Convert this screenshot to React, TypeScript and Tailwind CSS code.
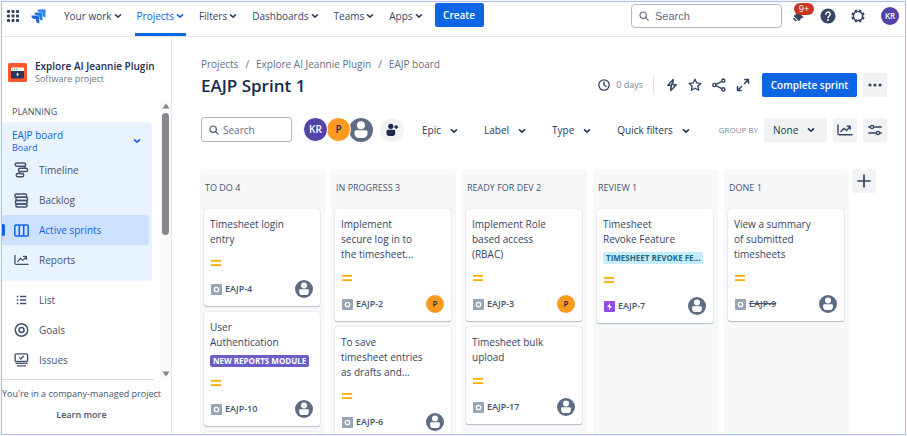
import React from "react";
import { clsx } from "clsx";

type IconProps = { className?: string };

const Chevron = ({ className }: IconProps) => (
  <svg viewBox="0 0 8 8" className={clsx("size-2 shrink-0", className)} fill="none" stroke="currentColor" strokeWidth="1.6" strokeLinecap="round" strokeLinejoin="round" aria-hidden="true">
    <path d="M1.5 2.8 4 5.2l2.5-2.4" />
  </svg>
);

const SearchIcon = ({ className }: IconProps) => (
  <svg viewBox="0 0 10 10" className={clsx("size-[10px] shrink-0", className)} fill="none" stroke="currentColor" strokeWidth="1.2" strokeLinecap="round" aria-hidden="true">
    <circle cx="4.2" cy="4.2" r="3.2" />
    <path d="m6.6 6.6 2.6 2.6" />
  </svg>
);

const AppSwitcherIcon = () => (
  <svg viewBox="0 0 12 12" className="size-3" fill="currentColor" aria-hidden="true">
    {[0, 4.5, 9].map((y) => [0, 4.5, 9].map((x) => <rect key={`${x}-${y}`} x={x} y={y} width="3" height="3" rx="0.8" />))}
  </svg>
);

const JiraLogo = () => (
  <svg viewBox="0 0 15 15" className="size-[15px]" aria-hidden="true">
    <path fill="#2684ff" d="M6.6.5h7.9v7.9A3.5 3.5 0 0 1 11.2 5V3.9H10A3.5 3.5 0 0 1 6.6.5z" />
    <path fill="#2178f0" d="M3.5 3.5h7.9v7.9A3.5 3.5 0 0 1 8.1 8V6.9H6.9A3.5 3.5 0 0 1 3.5 3.5z" />
    <path fill="#1868db" d="M.4 6.6h7.9v7.9A3.5 3.5 0 0 1 5 11.1V10H3.8A3.5 3.5 0 0 1 .4 6.6z" />
    <path stroke="#fff" strokeWidth=".6" fill="none" d="M6.9 3.500h4.500v4.500M3.800 6.600h4.500v4.500" opacity=".6" />
  </svg>
);

const BellIcon = () => (
  <svg viewBox="0 0 14 14" className="size-[14px]" fill="currentColor" aria-hidden="true">
    <path d="M4.8 2.2 12 8.6l-2.600.5-2 2.700c-.2.3-.5.3-.7.1L2 7.2c-.2-.2-.2-.5.1-.7l2-1.300z" />
    <path d="M1.9 8.400 5 11.500a2.200 2.200 0 0 1-3.100-3.100z" />
  </svg>
);

const HelpIcon = () => (
  <svg viewBox="0 0 16 16" className="size-4" aria-hidden="true">
    <circle cx="8" cy="8" r="7.5" fill="#344563" />
    <path d="M5.800 6.300a2.200 2.200 0 1 1 3.300 1.900c-.7.4-1.100.7-1.100 1.400" fill="none" stroke="#fff" strokeWidth="1.5" strokeLinecap="round" />
    <circle cx="8" cy="12" r="1" fill="#fff" />
  </svg>
);

const GearIcon = () => (
  <svg viewBox="0 0 14 14" className="size-[14px]" fill="none" stroke="currentColor" aria-hidden="true">
    <circle cx="7" cy="7" r="4.6" strokeWidth="1.5" />
    <g strokeWidth="2.6">
      {[22.5, 67.5, 112.5, 157.5, 202.5, 247.5, 292.5, 337.5].map((a) => (
        <path key={a} d="M7 2.300V.4" transform={`rotate(${a} 7 7)`} />
      ))}
    </g>
  </svg>
);

const ProjectLogo = () => (
  <svg viewBox="0 0 19 19" className="size-[19px] shrink-0" aria-hidden="true">
    <rect width="19" height="19" rx="1.5" fill="#ff5630" />
    <path d="M3 5.500A1 1 0 0 1 4 4.500h11a1 1 0 0 1 1 1V8H3z" fill="#fff" />
    <circle cx="4.700" cy="6.200" r=".7" fill="#ff8f73" />
    <circle cx="6.700" cy="6.200" r=".7" fill="#36b37e" />
    <circle cx="8.700" cy="6.200" r=".7" fill="#00b8d9" />
    <path d="M3 8h13v6.500a1 1 0 0 1-1 1H4a1 1 0 0 1-1-1z" fill="#253858" />
    <path d="M9.700 9.700 8.500 11.700h1l-.3 1.500 1.600-2.100h-1z" fill="#fff" stroke="#fff" strokeWidth=".4" />
  </svg>
);

const TimelineIcon = () => (
  <svg viewBox="0 0 15 16" className="h-4 w-[15px]" fill="none" stroke="currentColor" strokeWidth="1.5" aria-hidden="true">
    <rect x="1.2" y="1" width="10.5" height="3.2" rx="1.6" />
    <rect x="4.5" y="6.3" width="9" height="3.2" rx="1.6" />
    <rect x="2.2" y="11.6" width="7.5" height="3.2" rx="1.6" />
    <path d="M11.500 3.800 10 6.300M6 9.300l-1.500 2.500" />
  </svg>
);

const BacklogIcon = () => (
  <svg viewBox="0 0 15 15" className="size-[15px]" fill="none" stroke="currentColor" strokeWidth="1.5" aria-hidden="true">
    <rect x="1" y="1" width="11.5" height="3.3" rx="1" />
    <rect x="2" y="4.3" width="11.5" height="3.3" rx="1" />
    <rect x="1.5" y="7.6" width="11.5" height="3.3" rx="1" />
    <rect x="2" y="10.9" width="11" height="3.1" rx="1" />
  </svg>
);

const BoardIcon = () => (
  <svg viewBox="0 0 15 13" className="h-[13px] w-[15px]" fill="none" stroke="currentColor" strokeWidth="1.5" aria-hidden="true">
    <rect x=".8" y="1" width="13.4" height="11" rx="1" />
    <path d="M5.300 1v11M9.700 1v11" />
  </svg>
);

const ChartIcon = () => (
  <svg viewBox="0 0 16 12" className="h-3 w-4" fill="none" stroke="currentColor" strokeWidth="1.4" strokeLinecap="round" strokeLinejoin="round" aria-hidden="true">
    <path d="M1 1v8.500a1.200 1.200 0 0 0 1.200 1.200H15" />
    <path d="m4 7.500 3-3.300 2.400 2.200L13 2.800M10.200 2.200h3v3" />
  </svg>
);

const ListIcon = () => (
  <svg viewBox="0 0 10 10" className="h-[10px] w-[15px]" fill="none" stroke="currentColor" strokeWidth="1.5" aria-hidden="true">
    <path d="M.2 1.500h1.600M.2 5h1.600M.2 8.500h1.600M3.500 1.500h6.300M3.500 5h6.300M3.500 8.500h6.300" />
  </svg>
);

const GoalIcon = () => (
  <svg viewBox="0 0 14 14" className="h-[14px] w-[15px]" fill="none" stroke="currentColor" strokeWidth="1.5" aria-hidden="true">
    <circle cx="7" cy="7" r="6.2" />
    <circle cx="7" cy="7" r="2.5" />
  </svg>
);

const IssuesIcon = () => (
  <svg viewBox="0 0 15 14" className="h-[14px] w-[15px]" fill="none" stroke="currentColor" strokeWidth="1.4" aria-hidden="true">
    <rect x="1.2" y=".9" width="12.4" height="7.6" rx="1" />
    <path d="m5.300 4.600 1.500 1.500 3-3M1.500 10.400h12M3 12.900h9" />
  </svg>
);

const ClockIcon = () => (
  <svg viewBox="0 0 12 12" className="size-3" fill="none" stroke="currentColor" strokeWidth="1.3" strokeLinecap="round" aria-hidden="true">
    <circle cx="6" cy="6" r="5.2" />
    <path d="M6 3v3l2 1.500" />
  </svg>
);

const BoltIcon = () => (
  <svg viewBox="0 0 12 14" className="h-[14px] w-3" fill="none" stroke="currentColor" strokeWidth="1.4" strokeLinejoin="round" aria-hidden="true">
    <path d="M7.200 1.500 1.800 7.200h3.400L4.800 12.500l5.400-5.700H6.800z" />
    <path d="M6.500 3 5.500 7l-1 4" strokeWidth="1" />
  </svg>
);

const StarIcon = () => (
  <svg viewBox="0 0 14 14" className="size-[14px]" fill="none" stroke="currentColor" strokeWidth="1.3" strokeLinejoin="round" aria-hidden="true">
    <path d="m7 1.200 1.700 3.700 4.100.5-3 2.800.8 4L7 10.200l-3.600 2 .8-4-3-2.800 4.100-.5z" />
  </svg>
);

const ShareIcon = () => (
  <svg viewBox="0 0 14 14" className="size-[14px]" fill="none" stroke="currentColor" strokeWidth="1.4" aria-hidden="true">
    <circle cx="2.4" cy="7" r="1.6" />
    <circle cx="11.3" cy="2.6" r="1.6" />
    <circle cx="11.3" cy="11.4" r="1.6" />
    <path d="M3.900 6.300 9.800 3.300M3.900 7.700l5.900 3" />
  </svg>
);

const ExpandIcon = () => (
  <svg viewBox="0 0 14 14" className="size-[14px]" fill="none" stroke="currentColor" strokeWidth="1.5" strokeLinecap="round" strokeLinejoin="round" aria-hidden="true">
    <path d="M8.800 1.500h3.700v3.700M12.200 1.800 8.500 5.500M5.200 12.500H1.500V8.800M1.800 12.200l3.700-3.700" />
  </svg>
);

const DotsIcon = () => (
  <svg viewBox="0 0 14 4" className="h-1 w-[14px]" fill="currentColor" aria-hidden="true">
    <circle cx="2" cy="2" r="1.6" />
    <circle cx="7" cy="2" r="1.6" />
    <circle cx="12" cy="2" r="1.6" />
  </svg>
);

const SlidersIcon = () => (
  <svg viewBox="0 0 14 12" className="h-3 w-[14px]" fill="none" stroke="currentColor" strokeWidth="1.4" strokeLinecap="round" aria-hidden="true">
    <path d="M.8 3h1.400M5.800 3h7.400M.8 9h7.400M11.800 9h1.400" />
    <circle cx="4" cy="3" r="1.6" />
    <circle cx="10" cy="9" r="1.6" />
  </svg>
);

const AddPeopleIcon = () => (
  <svg viewBox="0 0 14 14" className="size-[14px]" fill="currentColor" aria-hidden="true">
    <circle cx="5.8" cy="3.3" r="2.6" />
    <path d="M1.500 8A1.200 1.200 0 0 1 2.700 6.800H9A1.200 1.200 0 0 1 10.200 8v2.300A2.700 2.700 0 0 1 7.500 13H4.200a2.700 2.700 0 0 1-2.700-2.700z" />
    <path d="M11.200 2v4M9.200 4h4" stroke="currentColor" strokeWidth="1.3" />
  </svg>
);

const PlusIcon = () => (
  <svg viewBox="0 0 14 14" className="size-[14px]" fill="none" stroke="currentColor" strokeWidth="1.7" aria-hidden="true">
    <path d="M7 .4v13.200M.4 7h13.200" />
  </svg>
);

const PersonAvatar = ({ className }: IconProps) => (
  <svg viewBox="0 0 24 24" className={clsx("shrink-0", className)} role="img" aria-label="Unassigned">
    <circle cx="12" cy="12" r="12" fill="#5e6c84" />
    <circle cx="12" cy="7.2" r="4" fill="#fff" />
    <path d="M5.500 13.800a1.600 1.600 0 0 1 1.600-1.600h9.800a1.600 1.600 0 0 1 1.600 1.600v1.700a4.500 4.500 0 0 1-4.500 4.500h-4a4.500 4.500 0 0 1-4.500-4.500z" fill="#fff" />
  </svg>
);

const PriorityIcon = () => (
  <svg viewBox="0 0 10 14" className="h-[14px] w-[10px]" role="img" aria-label="Medium priority">
    <path d="M0 4.800h10M0 9.200h10" stroke="#ffab00" strokeWidth="1.8" />
  </svg>
);

const TypeIcon = ({ epic }: { epic?: boolean }) =>
  epic ? (
    <svg viewBox="0 0 11 11" className="size-[11px] shrink-0" role="img" aria-label="Epic">
      <rect width="11" height="11" rx="1" fill="#904ee2" />
      <path d="M6 2 3 6h2.200L5 9l3-4H5.800z" fill="#fff" />
    </svg>
  ) : (
    <svg viewBox="0 0 11 11" className="size-[11px] shrink-0" role="img" aria-label="Task">
      <rect width="11" height="11" rx="1" fill="#97a5b4" />
      <circle cx="5.5" cy="5.5" r="2.2" fill="none" stroke="#fff" strokeWidth="1.3" />
    </svg>
  );

const navItems = ["Your work", "Projects", "Filters", "Dashboards", "Teams", "Apps"];

const TopBar = () => (
  <header className="flex h-[35px] shrink-0 items-stretch border-b border-[#e4e6ec] pr-[6px] pl-[5px] text-[#344563]">
    <div className="flex h-7 items-center gap-3">
      <button aria-label="Switch apps"><AppSwitcherIcon /></button>
      <a href="#home" aria-label="Jira home"><JiraLogo /></a>
    </div>
    <nav className="ml-4 flex items-stretch gap-[11px]">
      {navItems.map((item) => (
        <button
          key={item}
          className={clsx(
            "flex items-start gap-[2px] border-b-[3px] px-[2px] pt-[6px] font-medium whitespace-nowrap",
            item === "Projects" ? "border-[#0c66e4] text-[#0c66e4]" : "border-transparent",
          )}
        >
          <span className="leading-4">{item}</span>
          <Chevron className="mt-1" />
        </button>
      ))}
    </nav>
    <button className="mt-px ml-[10px] h-6 w-[49px] rounded-[2px] bg-[#0c66e4] font-semibold text-white">Create</button>
    <div className="ml-auto flex h-7 items-center">
      <label className="mr-[10px] flex h-6 w-[151px] items-center gap-[6px] rounded-[4px] border border-[#b3b9c4] px-[7px] text-[#5e6c84]">
        <SearchIcon />
        <input aria-label="Search Jira" placeholder="Search" className="w-full min-w-0 bg-transparent font-['Liberation_Sans',sans-serif] text-[11px] outline-none placeholder:text-[#5e6c84]" />
      </label>
      <button aria-label="Notifications, more than 9" className="relative mr-[14px]">
        <BellIcon />
        <span className="absolute -top-[6px] left-[2px] flex h-3 w-5 items-center justify-center rounded-full bg-[#ca3521] text-[9px] text-white">9+</span>
      </button>
      <button aria-label="Help" className="mr-[15px]"><HelpIcon /></button>
      <button aria-label="Settings" className="mr-4"><GearIcon /></button>
      <button className="size-[18px] rounded-full bg-[#5243aa] text-[8px] font-semibold text-white">KR</button>
    </div>
  </header>
);

const boardLinks = [
  { label: "Timeline", icon: <TimelineIcon /> },
  { label: "Backlog", icon: <BacklogIcon /> },
  { label: "Active sprints", icon: <BoardIcon />, active: true },
  { label: "Reports", icon: <ChartIcon /> },
];

const projectLinks = [
  { label: "List", icon: <ListIcon /> },
  { label: "Goals", icon: <GoalIcon /> },
  { label: "Issues", icon: <IssuesIcon /> },
];

const SideLink = ({ label, icon, active }: { label: string; icon: React.ReactNode; active?: boolean }) => (
  <a
    href={`#${label}`}
    aria-current={active ? "page" : undefined}
    className={clsx(
      "mr-[3px] flex h-[30px] items-center rounded-[3px]",
      active ? "bg-[#cce0ff] text-[#0c66e4]" : "text-[#44546f]",
    )}
  >
    <span className={clsx("h-3 w-[3px] rounded-r-[2px]", active && "bg-[#0c66e4]")} />
    <span className="ml-[9px] flex w-[15px] justify-center">{icon}</span>
    <span className="ml-[10px]">{label}</span>
  </a>
);

const Sidebar = () => (
  <aside className="flex w-[170px] shrink-0 flex-col border-r border-[#e4e6ec]">
    <div className="flex h-[63px] shrink-0 items-center gap-2 pt-2 pl-[6px]">
      <ProjectLogo />
      <div className="whitespace-nowrap">
        <h2 className="leading-[13px] font-semibold text-[#172b4d]">Explore AI Jeannie Plugin</h2>
        <p className="text-[9px] leading-3 text-[#6b778c]">Software project</p>
      </div>
    </div>
    <div className="flex min-h-0 flex-1">
      <div className="flex min-w-0 flex-1 flex-col overflow-hidden">
        <h3 className="flex h-[22px] shrink-0 items-center pt-px pl-[10px] text-[9px] font-medium text-[#44546f]">PLANNING</h3>
        <div className="mr-2 shrink-0 rounded-r-[4px] bg-[#e9f2ff] pb-[6px]">
          <button className="flex h-[33px] w-full items-center justify-between pt-[5px] pr-[11px] pl-[10px] text-left text-[#0c66e4]">
            <span>
              <span className="block leading-[14px]">EAJP board</span>
              <span className="block text-[9px] leading-3">Board</span>
            </span>
            <Chevron />
          </button>
          {boardLinks.map((l) => <SideLink key={l.label} {...l} />)}
        </div>
        <nav className="mt-1">
          {projectLinks.map((l) => <SideLink key={l.label} {...l} />)}
        </nav>
        <hr className="mt-auto mr-[6px] border-[#d5d9e2]" />
      </div>
      <div className="flex w-[11px] shrink-0 flex-col items-center bg-[#fafafa] py-[3px]" aria-hidden="true">
        <svg viewBox="0 0 8 6" className="h-[6px] w-2" fill="#85888c"><path d="M4 .5 7.700 5.500H.3z" /></svg>
        <div className="mt-1 h-[122px] w-[7px] rounded-full bg-[#85888c]" />
        <svg viewBox="0 0 8 6" className="mt-auto h-[6px] w-2" fill="#85888c"><path d="M4 5.500.3.5h7.400z" /></svg>
      </div>
    </div>
    <div className="flex h-[54px] shrink-0 flex-col items-center pt-[7px] pr-[10px] text-[#44546f]">
      <p className="text-[9px] leading-[14px] whitespace-nowrap">You're in a company-managed project</p>
      <a href="#learn" className="mt-[7px] text-[9px] leading-[14px] font-semibold">Learn more</a>
    </div>
  </aside>
);

type CardData = { lines: string; id: string; tag?: { text: string; tone: "purple" | "teal" }; epic?: boolean; who?: "P"; done?: boolean };

const columns: { name: string; count: number; cards: CardData[] }[] = [
  {
    name: "TO DO",
    count: 4,
    cards: [
      { lines: "Timesheet login\nentry", id: "EAJP-4" },
      { lines: "User\nAuthentication", id: "EAJP-10", tag: { text: "NEW REPORTS MODULE", tone: "purple" } },
      { lines: "", id: "" },
    ],
  },
  {
    name: "IN PROGRESS",
    count: 3,
    cards: [
      { lines: "Implement\nsecure log in to\nthe timesheet...", id: "EAJP-2", who: "P" },
      { lines: "To save\ntimesheet entries\nas drafts and...", id: "EAJP-6" },
    ],
  },
  {
    name: "READY FOR DEV",
    count: 2,
    cards: [
      { lines: "Implement Role\nbased access\n(RBAC)", id: "EAJP-3", who: "P" },
      { lines: "Timesheet bulk\nupload", id: "EAJP-17" },
    ],
  },
  {
    name: "REVIEW",
    count: 1,
    cards: [{ lines: "Timesheet\nRevoke Feature", id: "EAJP-7", epic: true, tag: { text: "TIMESHEET REVOKE FE...", tone: "teal" } }],
  },
  {
    name: "DONE",
    count: 1,
    cards: [{ lines: "View a summary\nof submitted\ntimesheets", id: "EAJP-9", done: true }],
  },
];

const Card = ({ lines, id, tag, epic, who, done }: CardData) => (
  <article className="min-h-10 shrink-0 rounded-[2px] bg-white pt-2 pr-[7px] pb-2 pl-[6px] shadow-[0_1px_1px_#091e4240,0_0_1px_#091e424f]">
    {id && (
      <>
        <p className="leading-[15px] whitespace-pre text-[#344563]">{lines}</p>
        {tag && (
          <div className="mt-[5px] flex">
            <span
              className={clsx(
                "h-3 truncate rounded-[2px] px-[3px] text-[8px] leading-3 font-bold",
                tag.tone === "purple" ? "bg-[#6e5dc6] text-white" : "bg-[#c6edfb] text-[#206a83]",
              )}
            >
              {tag.text}
            </span>
          </div>
        )}
        <div className="mt-[9px] pl-px"><PriorityIcon /></div>
        <div className="mt-[10px] flex h-[18px] items-center pl-px">
          <TypeIcon epic={epic} />
          <a href={`#${id}`} className={clsx("ml-[3px] text-[9px] font-semibold text-[#44546f]", done && "line-through")}>{id}</a>
          <span className="ml-auto">
            {who ? (
              <span className="flex size-[18px] items-center justify-center rounded-full bg-[#ff991f] text-[8px] font-semibold text-[#172b4d]">{who}</span>
            ) : (
              <PersonAvatar className="size-[18px]" />
            )}
          </span>
        </div>
      </>
    )}
  </article>
);

const FilterButton = ({ label }: { label: string }) => (
  <button className="flex items-center gap-[9px] font-medium whitespace-nowrap text-[#253858]">
    {label}
    <Chevron />
  </button>
);

const SquareButton = ({ label, children }: { label: string; children: React.ReactNode }) => (
  <button aria-label={label} className="flex size-6 shrink-0 items-center justify-center rounded-[2px] bg-[#f1f2f4] text-[#344563]">
    {children}
  </button>
);

const Board = () => (
  <main className="flex min-w-0 flex-1 flex-col overflow-hidden pr-[18px] pl-[29px]">
    <nav aria-label="Breadcrumb" className="mt-[19px] mb-px flex gap-[7px] leading-4 text-[#626f86]">
      <a href="#projects">Projects</a>
      <span>/</span>
      <a href="#project">Explore AI Jeannie Plugin</a>
      <span>/</span>
      <a href="#board">EAJP board</a>
    </nav>
    <div className="flex h-6 items-center text-[#344563]">
      <h1 className="pt-px text-[17px] leading-6 font-semibold whitespace-nowrap text-[#172b4d]">EAJP Sprint 1</h1>
      <div className="ml-auto flex items-center">
        <ClockIcon />
        <span className="ml-[6px] text-[9px] text-[#7a869a]">0 days</span>
        <span className="mr-3 ml-[10px] h-[18px] w-px bg-[#dfe1e6]" />
        <div className="mr-3 flex items-center gap-[10px]">
          <button aria-label="Automation"><BoltIcon /></button>
          <button aria-label="Star"><StarIcon /></button>
          <button aria-label="Share"><ShareIcon /></button>
          <button aria-label="Full screen"><ExpandIcon /></button>
        </div>
        <button className="mr-[6px] h-6 w-[95px] rounded-[2px] bg-[#0c66e4] font-semibold whitespace-nowrap text-white">Complete sprint</button>
        <SquareButton label="More actions"><DotsIcon /></SquareButton>
      </div>
    </div>
    <div className="mt-5 flex h-[25px] items-center">
      <label className="flex h-[25px] w-[91px] items-center gap-1 rounded-[3px] border border-[#b3b9c4] px-[7px] text-[#44546f]">
        <SearchIcon />
        <input aria-label="Search board" placeholder="Search" className="w-full min-w-0 bg-transparent pt-px outline-none placeholder:text-[#626f86]" />
      </label>
      <div className="ml-[11px] flex items-center">
        <button className="z-20 size-[25px] rounded-full border border-white bg-[#5243aa] text-[10px] font-semibold text-white">KR</button>
        <button className="z-10 -ml-[2px] size-[25px] rounded-full border border-white bg-[#ff991f] text-[10px] font-semibold text-[#172b4d]">P</button>
        <button aria-label="Unassigned" className="-ml-[2px]"><PersonAvatar className="size-6" /></button>
      </div>
      <button aria-label="Add people" className="ml-[7px] flex size-6 items-center justify-center rounded-full bg-[#f1f2f4] text-[#172b4d]"><AddPeopleIcon /></button>
      <div className="ml-[18px] flex gap-[26px] pt-[2px]">
        {["Epic", "Label", "Type", "Quick filters"].map((f) => <FilterButton key={f} label={f} />)}
      </div>
      <div className="ml-auto flex items-center gap-[6px]">
        <label htmlFor="group-by" className="text-[8px] whitespace-nowrap text-[#7a869a]">GROUP BY</label>
        <div className="relative">
          <select id="group-by" className="block h-6 w-[63px] appearance-none rounded-[2px] bg-[#f1f2f4] pt-px pl-[9px] font-medium text-[#253858]">
            <option>None</option>
          </select>
          <Chevron className="pointer-events-none absolute top-2 right-3 text-[#253858]" />
        </div>
        <SquareButton label="Insights"><ChartIcon /></SquareButton>
        <SquareButton label="View settings"><SlidersIcon /></SquareButton>
      </div>
    </div>
    <div className="mt-[27px] -ml-px flex min-h-0 flex-1 gap-[3px] pr-[11px]">
      <div className="flex min-h-0 flex-1 gap-[6px]">
        {columns.map((col) => (
          <section key={col.name} className="flex min-w-0 flex-1 flex-col gap-[6px] rounded-t-[4px] bg-[#f7f8f9] pr-[5px] pl-1">
            <h2 className="flex h-[34px] shrink-0 items-center pt-1 pl-px text-[9px] font-medium whitespace-nowrap text-[#44546f]">
              {col.name} {col.count}
            </h2>
            {col.cards.map((c, i) => <Card key={i} {...c} />)}
          </section>
        ))}
      </div>
      <SquareButton label="Add column"><PlusIcon /></SquareButton>
    </div>
  </main>
);

export default function App() {
  return (
    <div className="h-screen bg-[#f4f7fd] p-px font-['Open_Sans','Noto_Sans',sans-serif] text-[10px]">
      <div className="flex h-full flex-col overflow-hidden border border-[#a9c0ea] bg-white">
        <TopBar />
        <div className="flex min-h-0 flex-1">
          <Sidebar />
          <Board />
        </div>
      </div>
    </div>
  );
}
